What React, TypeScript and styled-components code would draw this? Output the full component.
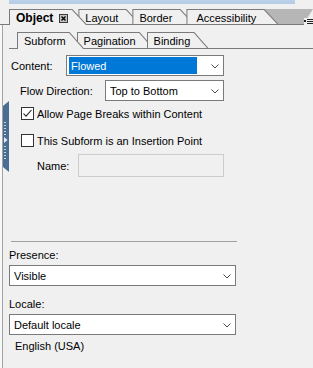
import styled, { createGlobalStyle } from "styled-components"

const GlobalStyle = createGlobalStyle`
  html, body {
    margin: 0;
    padding: 0;
    background: #f0f0f0;
  }
  body {
    font-family: "Liberation Sans", Arial, sans-serif;
    font-size: 11px;
    color: #000;
  }
`

type TabProps = {
  active?: boolean
  first?: boolean
  height: number
  overlap: number
  padLeft?: number
  padRight: number
  children: React.ReactNode
}

const Tab = ({ active, first, height, overlap, padLeft = 6, padRight, children }: TabProps) => (
  <TabEdge $active={active} $height={height} $overlap={first ? 0 : overlap}>
    <TabFace $padLeft={padLeft} $padRight={padRight}>
      {children}
    </TabFace>
  </TabEdge>
)

const Select = ({ width, value, selected }: { width: number; value: string; selected?: boolean }) => (
  <SelectBox $width={width}>
    {selected ? <Highlight>{value}</Highlight> : <SelectValue>{value}</SelectValue>}
    <Chevron width="8" height="5" viewBox="0 0 8 5">
      <polyline points="0.5,0.5 4,4 7.5,0.5" fill="none" stroke="#4a4a4a" strokeWidth="1" />
    </Chevron>
  </SelectBox>
)

const Checkbox = ({ checked, label }: { checked?: boolean; label: string }) => (
  <CheckRow>
    <Box>
      {checked && (
        <svg width="11" height="11" viewBox="0 0 11 11">
          <polyline points="1.5,5.5 4,8.2 9.5,2" fill="none" stroke="#222" strokeWidth="1.1" />
        </svg>
      )}
    </Box>
    <CheckLabel>{label}</CheckLabel>
  </CheckRow>
)

export default function App() {
  const dots = [21, 24, 27, 30, 33, 45, 48, 51, 54, 57]
  return (
    <>
      <GlobalStyle />
      <Page>
        <TopBar />
        <TabStrip $height={16} $pad={9} $top={5}>
          <Tab active first height={16} overlap={9} padRight={19}>
            <TabLabel $bold>Object</TabLabel>
            <CloseBox width="9" height="9" viewBox="0 0 9 9">
              <rect x="0.5" y="0.5" width="8" height="8" fill="#c4c4c4" stroke="#3a3a3a" />
              <path d="M2.5 2.5 L6.5 6.5 M6.5 2.5 L2.5 6.5" stroke="#000" strokeWidth="1.3" />
            </CloseBox>
          </Tab>
          <Tab height={16} overlap={9} padRight={23}>
            <TabLabel>Layout</TabLabel>
          </Tab>
          <Tab height={16} overlap={9} padRight={23}>
            <TabLabel>Border</TabLabel>
          </Tab>
          <Tab height={16} overlap={9} padLeft={9} padRight={23}>
            <TabLabel>Accessibility</TabLabel>
          </Tab>
          <StripFiller />
          <MenuGlyph width="9" height="7" viewBox="0 0 9 7">
            <rect x="0" y="0" width="9" height="7" fill="#f0f0f0" />
            <rect x="0" y="2" width="2" height="2" fill="#222" />
            <path d="M3 1.5 H9 M3 3.5 H9 M3 5.5 H9" stroke="#222" strokeWidth="1" />
          </MenuGlyph>
        </TabStrip>

        <Body>
          <Rail>
            <Handle>
              <svg width="6" height="71" viewBox="0 0 6 71">
                {dots.map((y) => (
                  <rect key={y} x="1" y={y} width="2" height="1" fill="#c9d8e8" />
                ))}
                <polygon points="1,36 4.5,39 1,42" fill="#e8eef5" />
              </svg>
            </Handle>
          </Rail>

          <Main>
            <TabStrip $height={17} $pad={8} $top={7}>
              <Tab active first height={17} overlap={8} padRight={19}>
                <TabLabel>Subform</TabLabel>
              </Tab>
              <Tab height={17} overlap={8} padRight={19}>
                <TabLabel>Pagination</TabLabel>
              </Tab>
              <Tab height={17} overlap={8} padRight={19}>
                <TabLabel>Binding</TabLabel>
              </Tab>
            </TabStrip>

            <FieldRow $top={6}>
              <RowLabel $indent={2} $width={55}>Content:</RowLabel>
              <Select width={158} value="Flowed" selected />
            </FieldRow>
            <FieldRow $top={4}>
              <RowLabel $indent={11} $width={85}>Flow Direction:</RowLabel>
              <Select width={119} value="Top to Bottom" />
            </FieldRow>

            <CheckGroup $top={6}>
              <Checkbox checked label="Allow Page Breaks within Content" />
            </CheckGroup>
            <CheckGroup $top={14}>
              <Checkbox label="This Subform is an Insertion Point" />
            </CheckGroup>

            <FieldRow $top={7}>
              <RowLabel $indent={28} $width={41}>Name:</RowLabel>
              <DisabledInput />
            </FieldRow>

            <Separator />

            <StackLabel $top={6}>Presence:</StackLabel>
            <StackField>
              <Select width={227} value="Visible" />
            </StackField>

            <StackLabel $top={11}>Locale:</StackLabel>
            <StackField>
              <Select width={227} value="Default locale" />
            </StackField>
            <LocaleName>English (USA)</LocaleName>
          </Main>
        </Body>
      </Page>
    </>
  )
}

const Page = styled.div`
  min-height: 100vh;
  display: flex;
  flex-direction: column;
  background: #f0f0f0;
`

const TopBar = styled.div`
  height: 4px;
  width: 286px;
  margin-left: 9px;
  background: linear-gradient(to bottom, #bcd3ea, #b3cbe4);
`

const TabStrip = styled.div<{ $height: number; $pad: number; $top: number }>`
  position: relative;
  display: flex;
  align-items: flex-end;
  height: ${(p) => p.$height}px;
  margin-top: ${(p) => p.$top}px;
  padding-left: ${(p) => p.$pad}px;
  &::after {
    content: "";
    position: absolute;
    left: 0;
    right: 0;
    bottom: 0;
    height: 1px;
    background: #7a7a7a;
    z-index: 2;
  }
`

const TabEdge = styled.div<{ $active?: boolean; $height: number; $overlap: number }>`
  position: relative;
  z-index: ${(p) => (p.$active ? 3 : 1)};
  display: flex;
  box-sizing: border-box;
  height: ${(p) => p.$height}px;
  margin-left: -${(p) => p.$overlap}px;
  padding: 1px 0 0 1px;
  background: #7a7a7a;
  clip-path: polygon(0 0, calc(100% - 15px) 0, 100% 100%, 0 100%);
  &:first-child {
    margin-left: 0;
  }
`

const TabFace = styled.div<{ $padLeft: number; $padRight: number }>`
  display: flex;
  align-items: center;
  flex: 1;
  padding: 1px ${(p) => p.$padRight}px 0 ${(p) => p.$padLeft}px;
  background: #f0f0f0;
  clip-path: polygon(0 0, calc(100% - 15.5px) 0, calc(100% - 1.4px) 100%, 0 100%);
`

const TabLabel = styled.span<{ $bold?: boolean }>`
  font-size: ${(p) => (p.$bold ? 12 : 11)}px;
  font-weight: ${(p) => (p.$bold ? 700 : 400)};
  line-height: 13px;
  white-space: nowrap;
`

const CloseBox = styled.svg`
  margin-left: 6px;
  flex-shrink: 0;
`

const StripFiller = styled.div`
  position: relative;
  z-index: 0;
  flex: 1;
  align-self: stretch;
  margin-left: -18px;
  background: #b6b6b6;
  clip-path: polygon(0 0, 100% 0, calc(100% - 10px) 100%, 0 100%);
`

const MenuGlyph = styled.svg`
  position: absolute;
  right: 0;
  bottom: 0;
  z-index: 4;
`

const Body = styled.div`
  flex: 1;
  display: flex;
`

const Rail = styled.div`
  width: 9px;
  flex-shrink: 0;
  display: flex;
  flex-direction: column;
  background: linear-gradient(to right, #f8f8f8 0 2px, #a3a3a3 2px 3px, transparent 3px);
`

const Handle = styled.div`
  width: 6px;
  height: 71px;
  margin: 76px 0 0 3px;
  background: #4a6d94;
  clip-path: polygon(0 5px, 100% 0, 100% 100%, 0 calc(100% - 5px));
  svg {
    display: block;
  }
`

const Main = styled.div`
  flex: 1;
  display: flex;
  flex-direction: column;
`

const FieldRow = styled.div<{ $top: number }>`
  display: flex;
  align-items: center;
  margin-top: ${(p) => p.$top}px;
`

const RowLabel = styled.div<{ $indent: number; $width: number }>`
  margin-left: ${(p) => p.$indent}px;
  width: ${(p) => p.$width}px;
  flex-shrink: 0;
  white-space: nowrap;
`

const SelectBox = styled.div<{ $width: number }>`
  display: flex;
  align-items: center;
  box-sizing: border-box;
  width: ${(p) => p.$width}px;
  height: 21px;
  padding: 1px 4px 1px 2px;
  border: 1px solid #7a7a7a;
  background: #fff;
`

const SelectValue = styled.span`
  flex: 1;
  padding-left: 2px;
  white-space: nowrap;
`

const Highlight = styled.span`
  flex: 1;
  align-self: stretch;
  display: flex;
  align-items: center;
  margin-right: 14px;
  padding-left: 2px;
  background: #0078d7;
  color: #fff;
`

const Chevron = styled.svg`
  flex-shrink: 0;
  margin-top: 1px;
`

const CheckGroup = styled.div<{ $top: number }>`
  margin-top: ${(p) => p.$top}px;
  margin-left: 12px;
`

const CheckRow = styled.div`
  display: flex;
  align-items: center;
  height: 13px;
`

const Box = styled.div`
  box-sizing: border-box;
  width: 13px;
  height: 13px;
  border: 1px solid #333;
  background: #fff;
  svg {
    display: block;
  }
`

const CheckLabel = styled.span`
  margin-left: 3px;
  white-space: nowrap;
`

const DisabledInput = styled.div`
  box-sizing: border-box;
  width: 146px;
  height: 23px;
  border: 1px solid #cccccc;
  background: #f0f0f0;
`

const Separator = styled.div`
  width: 226px;
  height: 1px;
  margin: 64px 0 0 2px;
  background: #a0a0a0;
`

const StackLabel = styled.div<{ $top: number }>`
  margin-top: ${(p) => p.$top}px;
  line-height: 14px;
`

const StackField = styled.div`
  margin-top: 3px;
`

const LocaleName = styled.div`
  margin: 4px 0 0 6px;
  line-height: 14px;
`
